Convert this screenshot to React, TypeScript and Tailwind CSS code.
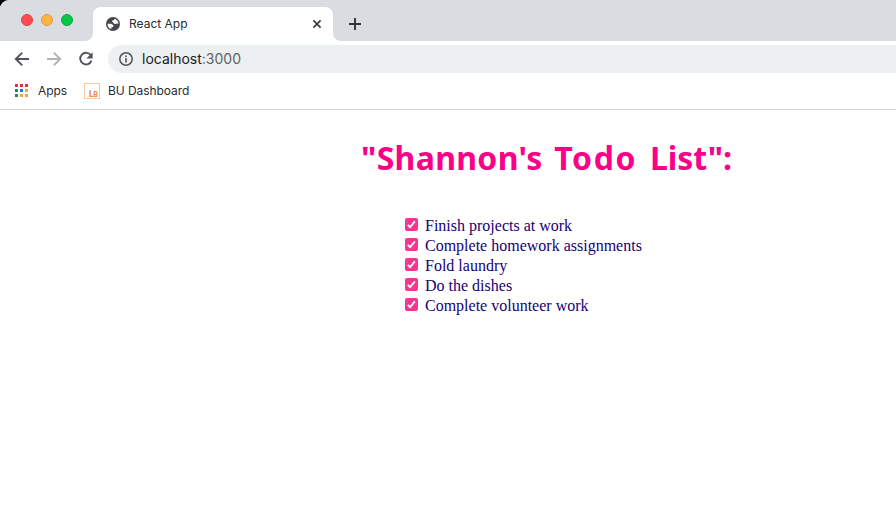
const todos = [
  "Finish projects at work",
  "Complete homework assignments",
  "Fold laundry",
  "Do the dishes",
  "Complete volunteer work",
];

const appDots = [
  "bg-[#db3340]", "bg-[#db3340]", "bg-[#db3340]",
  "bg-[#15905a]", "bg-[#1f78df]", "bg-[#eda63c]",
  "bg-[#15905a]", "bg-[#eda63c]", "bg-[#eda63c]",
];

function GlobeIcon() {
  return (
    <svg width="14" height="14" viewBox="0 0 14 14" className="shrink-0">
      <circle cx="7" cy="7" r="7" fill="#44474c" />
      <path d="M8.6 1.7 L8.2 3.1 L6.3 3.5 L6.1 4.7 L7.4 5.5 L7.8 6.8 L9.6 7.1 L10.6 6.4 L12.4 6.7 C12.3 4.3 10.8 2.3 8.6 1.7Z" fill="#fff" />
      <path d="M1.6 6.7 L5.1 6.8 L7.4 8.2 L7.2 9.8 L5.3 10.4 L5.2 12.1 C3 11.4 1.4 9.4 1.6 6.7Z" fill="#fff" />
    </svg>
  );
}

function CloseIcon() {
  return (
    <svg width="10" height="10" viewBox="0 0 10 10" className="ml-auto">
      <path d="M1.4 1.4 8.6 8.6M8.6 1.4 1.4 8.6" stroke="#3c4043" strokeWidth="1.8" />
    </svg>
  );
}

function PlusIcon() {
  return (
    <svg width="12" height="12" viewBox="0 0 12 12">
      <path d="M6 0V12M0 6H12" stroke="#303338" strokeWidth="1.9" />
    </svg>
  );
}

function ArrowIcon({ className }: { className: string }) {
  return (
    <svg width="16" height="16" viewBox="0 0 16 16" fill="none" className={className}>
      <path d="M15 8H2M8.2 1.6 1.8 8l6.4 6.4" stroke="currentColor" strokeWidth="1.9" />
    </svg>
  );
}

function ReloadIcon() {
  return (
    <svg width="16" height="16" viewBox="0 0 16 16" fill="none" className="ml-[16px]">
      <path d="M12.8 4.3A5.8 5.8 0 1 0 13.5 9.6" stroke="currentColor" strokeWidth="1.9" />
      <path d="M14.6 1.2v6.2H8.4Z" fill="currentColor" />
    </svg>
  );
}

function InfoIcon() {
  return (
    <svg width="14" height="14" viewBox="0 0 14 14" fill="none">
      <circle cx="7" cy="7" r="6.2" stroke="currentColor" strokeWidth="1.5" />
      <path d="M7 6.1v4.3M7 3.4v1.6" stroke="currentColor" strokeWidth="1.6" />
    </svg>
  );
}

function TabStrip() {
  return (
    <div className="bg-black">
      <div className="flex h-[41px] overflow-hidden rounded-tl-[9px] bg-white">
        <div className="flex w-[93px] items-start gap-2 rounded-br-[8px] bg-[#d9dce1] pt-[14px] pl-[21px]">
          <span className="size-3 rounded-full border border-[#e3404a] bg-[#fd4a53]" />
          <span className="size-3 rounded-full border border-[#df9c3f] bg-[#fdb341]" />
          <span className="size-3 rounded-full border border-[#09ad3e] bg-[#05c646]" />
        </div>
        <div className="w-[240px] bg-[#d9dce1] pt-[7px]">
          <div className="flex h-[34px] items-center rounded-t-[8px] bg-white pr-[11px] pl-[13px]">
            <GlobeIcon />
            <span className="ml-[9px] text-[12px] text-[#292c30]">React App</span>
            <CloseIcon />
          </div>
        </div>
        <div className="flex flex-1 items-start rounded-bl-[8px] bg-[#d9dce1] pt-[18px] pl-[16px]">
          <PlusIcon />
        </div>
      </div>
    </div>
  );
}

function Toolbar() {
  return (
    <div className="flex h-[36px] items-center pl-[14px] text-[#505459]">
      <ArrowIcon className="" />
      <ArrowIcon className="ml-[16px] -scale-x-100 text-[#b1b3b6]" />
      <ReloadIcon />
      <div className="ml-[14px] flex h-[28px] flex-1 items-center rounded-l-full bg-[#ecf0f1] pl-[11px]">
        <InfoIcon />
        <span className="ml-[9px] text-[14px] leading-[20px] text-[#202124]">
          localhost<span className="text-[#5f6368]">:3000</span>
        </span>
      </div>
    </div>
  );
}

function BookmarksBar() {
  return (
    <div className="flex h-[33px] items-center border-b border-[#d5d7d9] pb-[5px] pl-[15px] text-[12px] tracking-[-0.07px] text-[#292c30]">
      <div className="grid grid-cols-3 gap-[2px]">
        {appDots.map((color, i) => (
          <span key={i} className={`size-[3px] ${color}`} />
        ))}
      </div>
      <span className="ml-[10px] w-[29px]">Apps</span>
      <div className="ml-[17px] flex size-4 items-baseline justify-end border border-[#f8c9a0] pt-[5px] pr-px font-[Lato] text-[9px] leading-[9px] font-black tracking-normal text-[#ee8a3e]">
        L<span className="text-[7px]">B</span>
      </div>
      <span className="ml-[8px]">BU Dashboard</span>
    </div>
  );
}

export default function App() {
  return (
    <div className="h-[525px] w-[896px] overflow-hidden bg-white font-[Inter,sans-serif] whitespace-nowrap">
      <TabStrip />
      <Toolbar />
      <BookmarksBar />
      <main className="pt-[28px]">
        <h1 className="pl-[361px] font-['Noto_Sans','Open_Sans',sans-serif] text-[32px] leading-[40px] font-bold text-[#fb0088] [word-spacing:3px]">
          <span className="tracking-[0.3px]">"Shannon's </span>
          <span className="tracking-[1.6px]">Todo </span>
          <span className="tracking-[-0.1px]">List":</span>
        </h1>
        <ul className="mt-[38px] pl-[405px] font-['Liberation_Serif',serif] text-[16px] leading-[20px] text-[#190073]">
          {todos.map((todo) => (
            <li key={todo} className="flex h-5 items-center">
              <span className="mb-[3px] flex size-[13px] items-center justify-center rounded-[2px] bg-[#fb3391]">
                <svg width="11" height="11" viewBox="0 0 11 11" fill="none">
                  <path d="M1.8 5.8 4.1 8.1 8.9 2.4" stroke="#fff" strokeWidth="1.8" />
                </svg>
              </span>
              <span className="ml-[7px]">{todo}</span>
            </li>
          ))}
        </ul>
      </main>
    </div>
  );
}
